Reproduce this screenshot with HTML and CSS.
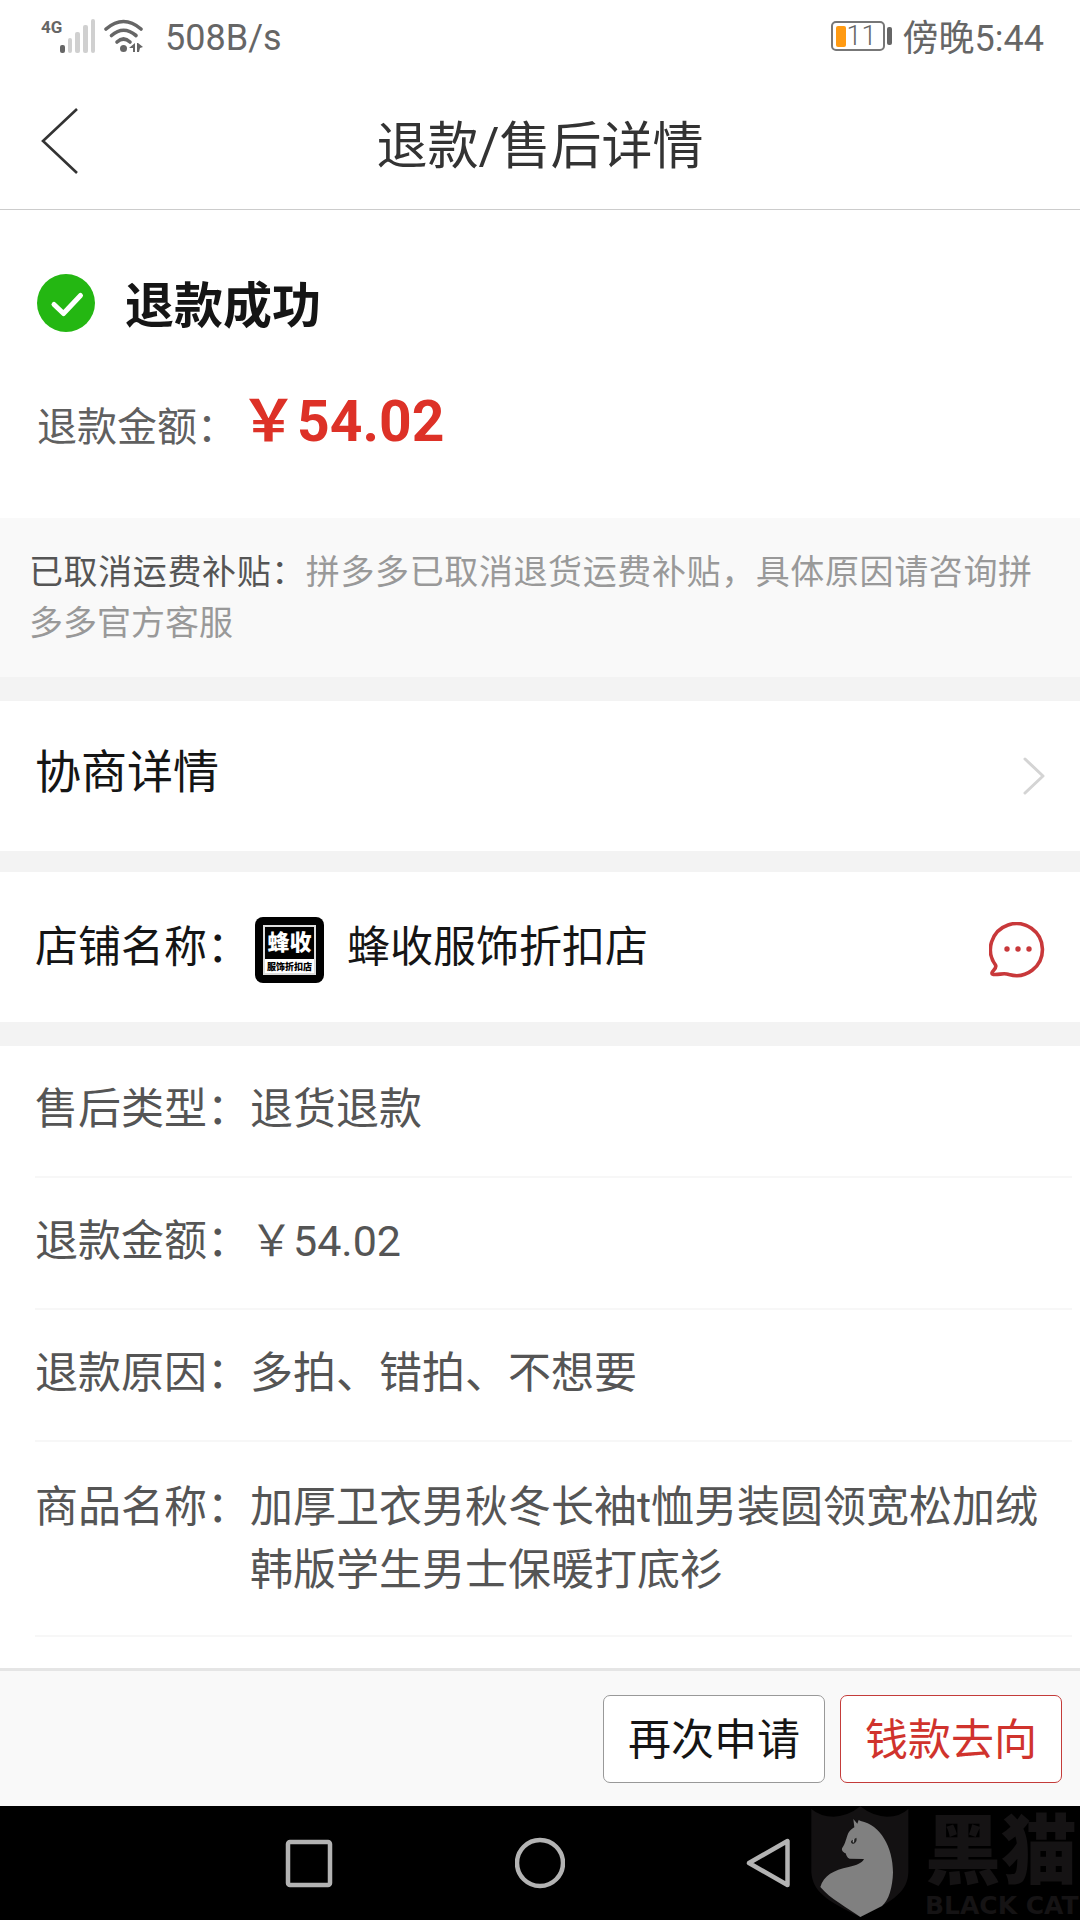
FILE: index.html
```html
<!DOCTYPE html>
<html lang="zh-CN">
<head>
<meta charset="utf-8">
<meta name="viewport" content="width=device-width, initial-scale=1">
<title>退款/售后详情</title>
<link rel="stylesheet" href="styles.css">
</head>
<body>
<div class="status">
  <span class="status-net">4G</span>
  <svg class="status-signal" width="36" height="34" viewBox="0 0 36 34" aria-hidden="true">
    <rect x="0" y="26" width="5" height="8" rx="2" fill="#666"/>
    <g fill="#d0d0d0"><rect x="8" y="19" width="4" height="15" rx="2"/><rect x="15" y="13" width="5" height="21" rx="2"/><rect x="23" y="6" width="5" height="28" rx="2"/><rect x="31" y="0" width="4" height="34" rx="2"/></g>
  </svg>
  <svg class="status-wifi" width="40" height="34" viewBox="0 0 40 34" aria-hidden="true">
    <g fill="none" stroke="#666" stroke-width="3.6" stroke-linecap="round"><path d="M2 10Q19.500-5 37 10"/><path d="M7.500 16.500Q19.500 6 32 16.500"/><path d="M13 23Q19.500 17 26 23"/></g>
    <circle cx="19.500" cy="29.500" r="3.500" fill="#666"/>
    <path d="M31 24v9h-2v-4h-4zM33 24h1l5 4-3 1-1 4h-2z" fill="#666"/>
  </svg>
  <span class="status-speed">508B/s</span>
  <div class="battery"><span class="battery-level"></span><span class="battery-text">11</span></div>
  <span class="battery-tip"></span>
  <span class="status-time">傍晚5:44</span>
</div>

<header class="header">
  <button class="back" type="button" aria-label="返回">
    <svg width="38" height="68" viewBox="0 0 38 68"><path d="M36 2 2 34l34 32" fill="none" stroke="#333" stroke-width="2.6"/></svg>
  </button>
  <h1 class="title">退款/售后详情</h1>
</header>

<main class="main">
  <section class="result">
    <div class="result-head">
      <svg width="58" height="58" viewBox="0 0 58 58" aria-hidden="true"><circle cx="29" cy="29" r="29" fill="#24b712"/><path d="M17 30.500 26.500 39.500 43.500 21.500" fill="none" stroke="#fff" stroke-width="5" stroke-linecap="round" stroke-linejoin="round"/></svg>
      <h2 class="result-title">退款成功</h2>
    </div>
    <p class="amount"><span class="amount-label">退款金额：</span><strong class="amount-value">￥54.02</strong></p>
  </section>

  <p class="notice"><span class="notice-label">已取消运费补贴：</span>拼多多已取消退货运费补贴，具体原因请咨询拼多多官方客服</p>

  <a class="panel talk" href="#talk">
    <span class="talk-text">协商详情</span>
    <svg width="22" height="38" viewBox="0 0 22 38" aria-hidden="true"><path d="M2 2 20 19 2 36" fill="none" stroke="#d4d4d4" stroke-width="3" stroke-linecap="round" stroke-linejoin="round"/></svg>
  </a>

  <section class="panel shop">
    <span class="shop-label">店铺名称：</span>
    <div class="logo">
      <div class="logo-frame"><span class="logo-name">蜂收</span><span class="logo-sub">服饰折扣店</span></div>
    </div>
    <span class="shop-name">蜂收服饰折扣店</span>
    <button class="chat" type="button" aria-label="联系商家">
      <svg width="56" height="56" viewBox="0 0 56 56"><path d="M6.500 43A26 26 0 1 1 20 52.500C14 50.500 11 53 4.500 52.500 2 52 3 50 4.500 48.500 6.500 46.500 7.500 45 6.500 43Z" fill="none" stroke="#c8383a" stroke-width="3.600" stroke-linejoin="round"/><g fill="#c8383a"><circle cx="18" cy="27" r="2.700"/><circle cx="29" cy="27" r="2.700"/><circle cx="40" cy="27" r="2.700"/></g></svg>
    </button>
  </section>

  <dl class="details">
    <div class="row"><dt>售后类型：</dt><dd>退货退款</dd></div>
    <div class="row"><dt>退款金额：</dt><dd>￥54.02</dd></div>
    <div class="row"><dt>退款原因：</dt><dd>多拍、错拍、不想要</dd></div>
    <div class="row"><dt>商品名称：</dt><dd>加厚卫衣男秋冬长袖t恤男装圆领宽松加绒韩版学生男士保暖打底衫</dd></div>
  </dl>
</main>

<footer class="actions">
  <button class="btn" type="button">再次申请</button>
  <button class="btn btn-red" type="button">钱款去向</button>
</footer>

<nav class="sysnav">
  <button type="button" aria-label="最近任务"><svg width="50" height="52" viewBox="0 0 50 52"><rect x="3" y="5" width="42" height="43" rx="2" fill="none" stroke="#b3b3b3" stroke-width="4.500"/></svg></button>
  <button type="button" aria-label="主页"><svg width="50" height="52" viewBox="0 0 50 52"><circle cx="25" cy="26" r="23" fill="none" stroke="#b3b3b3" stroke-width="4.500"/></svg></button>
  <button type="button" aria-label="返回"><svg width="50" height="52" viewBox="0 0 50 52"><path d="M42.500 4v44L4 26Z" fill="none" stroke="#b3b3b3" stroke-width="4.500" stroke-linejoin="round"/></svg></button>
  <div class="mark">
    <svg width="98" height="112" viewBox="92 46 294 336" aria-hidden="true">
      <path d="M93 55Q120 78 160 78 205 76 240 47 275 76 320 78 360 78 384 55V245C382 300 345 330 240 379 135 330 97 300 93 245Z" fill="#131112"/>
      <path d="M219 85 231 99 235 88 241 91C300 102 338 170 338 245 337 290 325 330 305 346L240 379C200 350 150 325 120 289 130 255 160 238 205 229 230 224 245 217 251 205L208 204C200 202 198 193 196 188 188 184 182 178 186 171 196 158 198 140 204 127 209 118 216 114 222 110Z" fill="#808080"/>
      <path d="M212 151 228 141C231 150 225 160 216 159Q211 157 212 151Z" fill="#222"/>
      <path d="M218 146 222 144 221 156 217 154Z" fill="#999"/>
    </svg>
    <div class="mark-text"><span class="mark-cn">黑猫</span><span class="mark-en">BLACK CAT</span></div>
  </div>
</nav>
</body>
</html>
```
FILE: styles.css
```css
* { box-sizing: border-box; }

body {
  margin: 0;
  min-height: 100vh;
  display: flex;
  flex-direction: column;
  background: #fff;
  color: #151515;
  font-family: Roboto, "Noto Sans CJK SC", sans-serif;
  font-size: 43px;
  line-height: 63px;
}

h1, h2, p, dl, dd { margin: 0; }
svg { display: block; flex: none; }

button {
  padding: 0;
  border: 0;
  background: none;
  color: inherit;
  font: inherit;
}

/* Phone status bar */
.status {
  display: flex;
  align-items: center;
  height: 72px;
  padding: 0 36px 0 41px;
  color: #666;
  font-size: 36px;
  line-height: 40px;
}
.status-net {
  align-self: flex-start;
  width: 19px;
  padding-top: 18px;
  font-size: 17px;
  font-weight: 700;
  line-height: 18px;
}
.status-wifi { margin-left: 8px; }
.status-speed { margin: 4px auto 0 21px; }
.battery {
  display: flex;
  align-items: center;
  gap: 1px;
  width: 54px;
  height: 30px;
  padding: 0 3px;
  border: 2px solid #777;
  border-radius: 5px;
  font-size: 27px;
  font-weight: 300;
}
.battery-level {
  width: 10px;
  height: 21px;
  border-radius: 2px;
  background: #ff9a12;
}
.battery-tip {
  width: 5px;
  height: 18px;
  margin: 0 11px 0 2px;
  border-radius: 2px;
  background: #666;
}
.status-time { margin-top: 5px; }

/* Title bar */
.header {
  display: grid;
  grid-template-columns: 100px 1fr 100px;
  align-items: center;
  height: 138px;
  border-bottom: 1px solid #ccc;
  color: #333;
}
.back { padding-left: 41px; }
.title {
  padding-top: 12px;
  font-size: 51px;
  font-weight: 400;
  text-align: center;
}

/* Refund result */
.result { padding: 61px 37px 59px; }
.result-head {
  display: flex;
  align-items: center;
  gap: 30px;
}
.result-title { padding-top: 4px; font-size: 49px; font-weight: 700; }
.result-head svg { margin-bottom: 4px; }
.amount {
  display: flex;
  align-items: baseline;
  gap: 3px;
  margin-top: 52px;
}
.amount-label { color: #606060; font-size: 40px; }
.amount-value { color: #dd3127; font-size: 57px; font-weight: 700; }

.notice {
  padding: 29px 48px 28px 29px;
  background: #f9f9f9;
  color: #999;
  font-size: 34px;
  line-height: 51px;
  text-align: justify;
}
.notice-label { color: #555; }

.panel {
  display: flex;
  align-items: center;
  padding: 0 35px;
  color: #151515;
  text-decoration: none;
}
.talk {
  justify-content: space-between;
  height: 174px;
  border-top: 24px solid #f3f3f3;
  font-size: 46px;
}
.talk-text { padding-bottom: 8px; }
.shop {
  height: 195px;
  border-top: 21px solid #f3f3f3;
  border-bottom: 24px solid #f3f3f3;
}
.logo {
  width: 69px;
  height: 66px;
  margin: 6px 23px 0 5px;
  padding: 8px;
  border-radius: 8px;
  background: #000;
}
.logo-frame {
  display: flex;
  flex-direction: column;
  align-items: center;
  overflow: hidden;
  height: 50px;
  border: 2px solid #ddd;
  font-weight: 900;
}
.logo-name { color: #fff; font-size: 22px; line-height: 32px; }
.logo-sub {
  width: 100%;
  background: #fff;
  color: #000;
  font-size: 9px;
  line-height: 16px;
  text-align: center;
}
.chat { margin: 6px 0 0 auto; }

/* Order details */
.details {
  padding: 0 8px 31px 35px;
  color: #555;
}
.row {
  display: flex;
  padding: 32px 30px 35px 0;
  border-bottom: 2px solid #f7f7f7;
}
.row:last-child { padding: 34px 30px 33px 0; }
dt { flex: none; }

/* Bottom actions */
.actions {
  display: flex;
  justify-content: flex-end;
  gap: 15px;
  margin-top: auto;
  padding: 24px 18px 23px;
  border-top: 3px solid #e5e5e5;
  background: #f9f9f9;
}
.btn {
  width: 222px;
  height: 88px;
  padding-top: 2px;
  border: 1px solid #999;
  border-radius: 7px;
  background: #fff;
}
.btn-red { border-color: #c43c3a; color: #d0332d; }

/* System navigation */
.sysnav {
  position: relative;
  display: flex;
  justify-content: center;
  align-items: center;
  gap: 180px;
  height: 114px;
  background: #000;
}
.mark {
  position: absolute;
  top: 0;
  right: 0;
  display: flex;
  gap: 16px;
  color: #151314;
  font-weight: 900;
  white-space: nowrap;
}
.mark-text { display: flex; flex-direction: column; width: 155px; }
.mark-cn { padding-top: 4px; font-size: 76px; line-height: 84px; }
.mark-en { font-family: "DejaVu Sans", sans-serif; font-size: 25px; line-height: 24px; }
```
